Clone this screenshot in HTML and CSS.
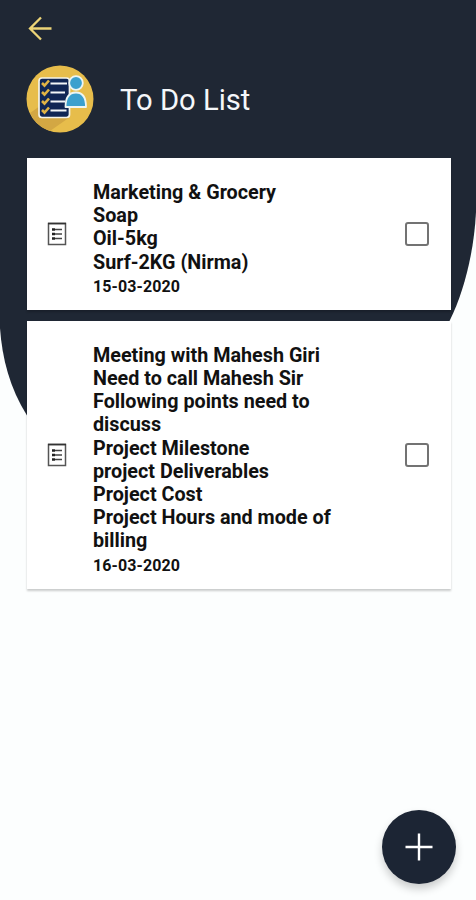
FILE: index.html
```
<!DOCTYPE html>
<html lang="en">
<head>
  <meta charset="UTF-8" />
  <meta name="viewport" content="width=device-width, initial-scale=1.0"/>
  <title>To Do List</title>
  <link rel="stylesheet" href="styles.css">
</head>
<body>
  <svg class="backdrop" viewBox="0 0 476 900" aria-hidden="true">
    <path d="M0 0H476V212C474 252 464 292 449.500 321L27 415.500C10 389 2 358 0 328Z" fill="#1f2734"/>
  </svg>

  <header>
    <button class="back" aria-label="Back">
      <svg width="26" height="26" viewBox="0 0 26 26" fill="none" stroke="#ecd477" stroke-width="2.300">
        <path d="M25.500 12.500H4M15 1.500L4 12.500L15 23.500"/>
      </svg>
    </button>
    <div class="title">
      <svg class="logo" width="68" height="68" viewBox="0 0 68 68">
        <circle cx="34" cy="34" r="33.500" fill="#e7bd4b"/>
        <path d="M4 48L14 41L44 52L24 66A33.500 33.500 0 0 1 4 48Z" fill="#d3a743"/>
        <rect x="13" y="13" width="30.500" height="39.500" rx="3" fill="#102655" stroke="#f4f3e8" stroke-width="1.700"/>
        <path d="M24.500 18.500H41M24.500 27.500H39M24.500 36.500H39M24.500 45.500H40.500" stroke="#f2f5f8" stroke-width="2.100"/>
        <path d="M16 18L18.500 20.500L23 15.500M16 27L18.500 29.500L23 24.500M16 36L18.500 38.500L23 33.500M16 45L18.500 47.500L23 42.500" fill="none" stroke="#e0b345" stroke-width="2.600"/>
        <path d="M39.500 42C39.500 33 42.500 27.500 50 27.500S60 33 60 42Z" fill="#3ba0ce" stroke="#edf5f3" stroke-width="1.800" stroke-linejoin="round"/>
        <circle cx="50" cy="18" r="6.800" fill="#3ba0ce" stroke="#edf5f3" stroke-width="1.800"/>
      </svg>
      <h1>To Do List</h1>
    </div>
  </header>

  <main>
    <div class="card">
      <svg class="note" width="20" height="24" viewBox="0 0 20 24">
        <rect x="1.500" y="1.500" width="17" height="21" fill="#fff" stroke="#555" stroke-width="1.500"/>
        <path d="M1 1.500H19" stroke="#333" stroke-width="1.600"/>
        <path d="M5 7.500H8M5 12H8M5 16.500H8" stroke="#222" stroke-width="2.600"/>
        <path d="M8 7.500H15M8 12H15M8 16.500H15" stroke="#444" stroke-width="1.700"/>
      </svg>
      <div class="text">
        <p>Marketing &amp; Grocery<br>Soap<br>Oil-5kg<br>Surf-2KG (Nirma)</p>
        <time>15-03-2020</time>
      </div>
      <input type="checkbox" aria-label="Done">
    </div>

    <div class="card">
      <svg class="note" width="20" height="24" viewBox="0 0 20 24">
        <rect x="1.500" y="1.500" width="17" height="21" fill="#fff" stroke="#555" stroke-width="1.500"/>
        <path d="M1 1.500H19" stroke="#333" stroke-width="1.600"/>
        <path d="M5 7.500H8M5 12H8M5 16.500H8" stroke="#222" stroke-width="2.600"/>
        <path d="M8 7.500H15M8 12H15M8 16.500H15" stroke="#444" stroke-width="1.700"/>
      </svg>
      <div class="text">
        <p>Meeting with Mahesh Giri<br>Need to call Mahesh Sir<br>Following points need to<br>discuss<br>Project Milestone<br>project Deliverables<br>Project Cost<br>Project Hours and mode of<br>billing</p>
        <time>16-03-2020</time>
      </div>
      <input type="checkbox" aria-label="Done">
    </div>
  </main>

  <button class="add" aria-label="Add">
    <svg width="28" height="28" viewBox="0 0 28 28" stroke="#fff" stroke-width="2.400">
      <path d="M14 0.500V27.500M0.500 14H27.500"/>
    </svg>
  </button>
</body>
</html>
```
FILE: styles.css
```
* {
  box-sizing: border-box;
}

body {
  font-family: Roboto, sans-serif;
  background: #fcfefe;
  margin: 0;
  height: 900px;
  overflow: hidden;
}

button {
  border: none;
  padding: 0;
  background: none;
  cursor: pointer;
}

/* dark curved shape behind everything */
.backdrop {
  position: absolute;
  top: 0;
  left: 0;
  width: 476px;
  height: 900px;
  z-index: -1;
}

header {
  padding: 16px 26px 0;
}

.back {
  display: block;
  height: 26px;
}

.title {
  display: flex;
  align-items: center;
  margin-top: 23px;
}

h1 {
  margin: 1px 0 0 26px;
  font-size: 29.2px;
  font-weight: 400;
  color: #f5f7fa;
}

main {
  display: flex;
  flex-direction: column;
  gap: 11px;
  padding: 25px 25px 0 27px;
}

.card {
  display: flex;
  align-items: center;
  background: #fff;
  padding: 23px 22px 13px 20px;
  box-shadow: 0 2px 2px rgba(0,0,0,0.2);
}

.note {
  flex: none;
  margin-top: -10px;
}

.text {
  flex: 1;
  margin-left: 26px;
  color: #111;
  white-space: nowrap;
}

.text p {
  margin: 0;
  font-size: 19.75px;
  font-weight: 700;
  line-height: 23.2px;
}

.text time {
  display: block;
  margin-top: 2px;
  font-size: 16px;
  font-weight: 700;
  line-height: 21px;
  letter-spacing: 0.1px;
}

.card input {
  appearance: none;
  width: 24px;
  height: 24px;
  margin: -10px 0 0;
  border: 2px solid #737373;
  border-radius: 3px;
}

.add {
  position: fixed;
  right: 20px;
  bottom: 16px;
  display: flex;
  align-items: center;
  justify-content: center;
  width: 74px;
  height: 74px;
  border-radius: 50%;
  background: #1c2534;
  box-shadow: 0 5px 9px rgba(0,0,0,0.2);
}
```
